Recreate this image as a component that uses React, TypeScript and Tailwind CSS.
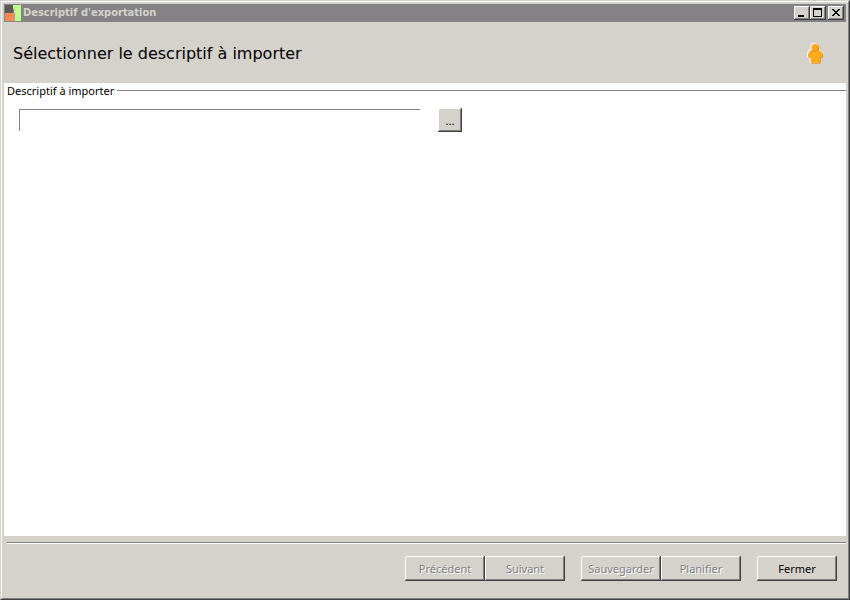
import React, { useState } from 'react';

// Relief 3D classique des boutons
const RAISED =
  'bg-[#d5d2cc] shadow-[inset_-1px_-1px_#404040,inset_1px_1px_#ffffff,inset_-2px_-2px_#808080]';

function AppIcon() {
  return (
    <svg className="w-4 h-4 ml-px mr-0.5 shrink-0" viewBox="0 0 16 16" shapeRendering="crispEdges" aria-hidden="true">
      <path fill="#5c5a58" d="M0 0h8v8H0z" />
      <path fill="#ff8a50" d="M0 8h9v8H0z" />
      <path fill="#bfff8c" d="M8 0h8v16h-6V8H9V4H8z" />
      <path fill="#8fa3b8" d="M9 8h1v8H9z" />
    </svg>
  );
}

function PersonIcon() {
  return (
    <svg className="w-6 h-6 shrink-0" viewBox="0 0 24 24" aria-hidden="true">
      <g fill="#fff3dc" stroke="#fff3dc" strokeWidth="1.5" transform="translate(-.6 -.4)">
        <circle cx="12" cy="5.500" r="3.600" />
        <path d="M9 8h6c2.500.6 4.300 2.800 4.300 5.500 0 1.500-.8 2.200-2 2.200l-.4 5.300H8l-.6-5.300c-1.500 0-2.400-.7-2.400-2.200C5 10.800 6.600 8.600 9 8z" />
      </g>
      <g fill="#b97a2a" transform="translate(.5 .4)">
        <circle cx="12" cy="5.500" r="3.600" />
        <path d="M9 8h6c2.500.6 4.300 2.800 4.300 5.500 0 1.500-.8 2.200-2 2.200l-.4 5.300H8l-.6-5.300c-1.500 0-2.400-.7-2.400-2.200C5 10.800 6.600 8.600 9 8z" />
      </g>
      <path
        d="M9 8h6c2.500.6 4.300 2.800 4.300 5.500 0 1.500-.8 2.200-2 2.200l-.4 5.300H8l-.6-5.300c-1.500 0-2.400-.7-2.400-2.200C5 10.800 6.600 8.600 9 8z"
        fill="#ffab1c"
      />
      <circle cx="12" cy="5.500" r="3.600" fill="#ffab1c" />
      <path d="M9 8.300c1.700 1.200 4.200 1.200 6 0" fill="none" stroke="#d18a1e" strokeWidth="1" />
    </svg>
  );
}

function CaptionButton({ label, children }: { label: string; children: React.ReactNode }) {
  return (
    <button type="button" aria-label={label} className={`w-4 h-[14px] shrink-0 ${RAISED}`}>
      <svg className="w-4 h-[14px]" viewBox="0 0 16 14" shapeRendering="crispEdges" aria-hidden="true">
        {children}
      </svg>
    </button>
  );
}

function TitleBar() {
  return (
    <div className="flex items-center h-[18px] pr-0.5 bg-[#848284]">
      <AppIcon />
      <h1 className="grow font-['DejaVu_Sans_Condensed','Noto_Sans',sans-serif] text-[11px] leading-4 font-bold text-[#d5d2cc]">
        Descriptif d'exportation
      </h1>
      <CaptionButton label="Réduire">
        <path d="M4 9h6v2H4z" />
      </CaptionButton>
      <CaptionButton label="Agrandir">
        <path fillRule="evenodd" d="M3 2h9v9H3zM4 4v6h7V4z" />
      </CaptionButton>
      <div className="w-0.5" />
      <CaptionButton label="Fermer la fenêtre">
        <path d="M4 3h2v1h1v1h2V4h1V3h2v1h-1v1h-1v1H9v1h1v1h1v1h1v1h-2V9H9V8H7v1H6v1H4V9h1V8h1V7h1V6H6V5H5V4H4z" />
      </CaptionButton>
    </div>
  );
}

function WizardButton({ label, disabled = false }: { label: string; disabled?: boolean }) {
  return (
    <button
      type="button"
      disabled={disabled}
      className={`w-20 h-[25px] text-[11px] leading-4 text-black disabled:text-[#848284] disabled:[text-shadow:1px_1px_#ffffff] ${RAISED}`}
    >
      {label}
    </button>
  );
}

export default function App() {
  const [path, setPath] = useState('');

  return (
    <div className="h-screen border border-t-[#d5d2cc] border-l-[#d5d2cc] border-r-[#404040] border-b-[#404040] font-['Noto_Sans',sans-serif] text-black">
      <div className="flex flex-col h-full p-0.5 border border-t-white border-l-white border-r-[#808080] border-b-[#808080] bg-[#d5d2cc]">
        <TitleBar />

        {/* En-tête de l'assistant */}
        <header className="flex items-center justify-between h-[61px] pt-0.5 pl-[9px] pr-[19px]">
          <h2 className="font-['DejaVu_Sans',sans-serif] text-[16px] leading-6">
            Sélectionner le descriptif à importer
          </h2>
          <PersonIcon />
        </header>

        {/* Contenu */}
        <main className="grow bg-white">
          <fieldset className="border-t border-[#808080]">
            <legend className="px-[3px] text-[11px] leading-[15px]">
              <label htmlFor="descriptif">Descriptif à importer</label>
            </legend>
            <div className="flex items-center gap-[18px] pl-[15px] pt-[10px]">
              <input
                id="descriptif"
                type="text"
                value={path}
                onChange={(e) => setPath(e.target.value)}
                className="w-[401px] h-[22px] px-1 border-t border-l border-[#808080] bg-white text-[11px] outline-none"
              />
              <button type="button" aria-label="Parcourir" className={`w-6 h-6 pt-0.5 text-[11px] leading-4 ${RAISED}`}>
                ...
              </button>
            </div>
          </fieldset>
        </main>

        {/* Barre de navigation */}
        <footer className="pt-[6px]">
          <div className="ml-[3px] h-0.5 border-t border-t-[#808080] border-b border-b-white" />
          <div className="flex justify-end gap-4 pt-3 pb-[15px] pr-[9px]">
            <div className="flex">
              <WizardButton label="Précédent" disabled />
              <WizardButton label="Suivant" disabled />
            </div>
            <div className="flex">
              <WizardButton label="Sauvegarder" disabled />
              <WizardButton label="Planifier" disabled />
            </div>
            <WizardButton label="Fermer" />
          </div>
        </footer>
      </div>
    </div>
  );
}
